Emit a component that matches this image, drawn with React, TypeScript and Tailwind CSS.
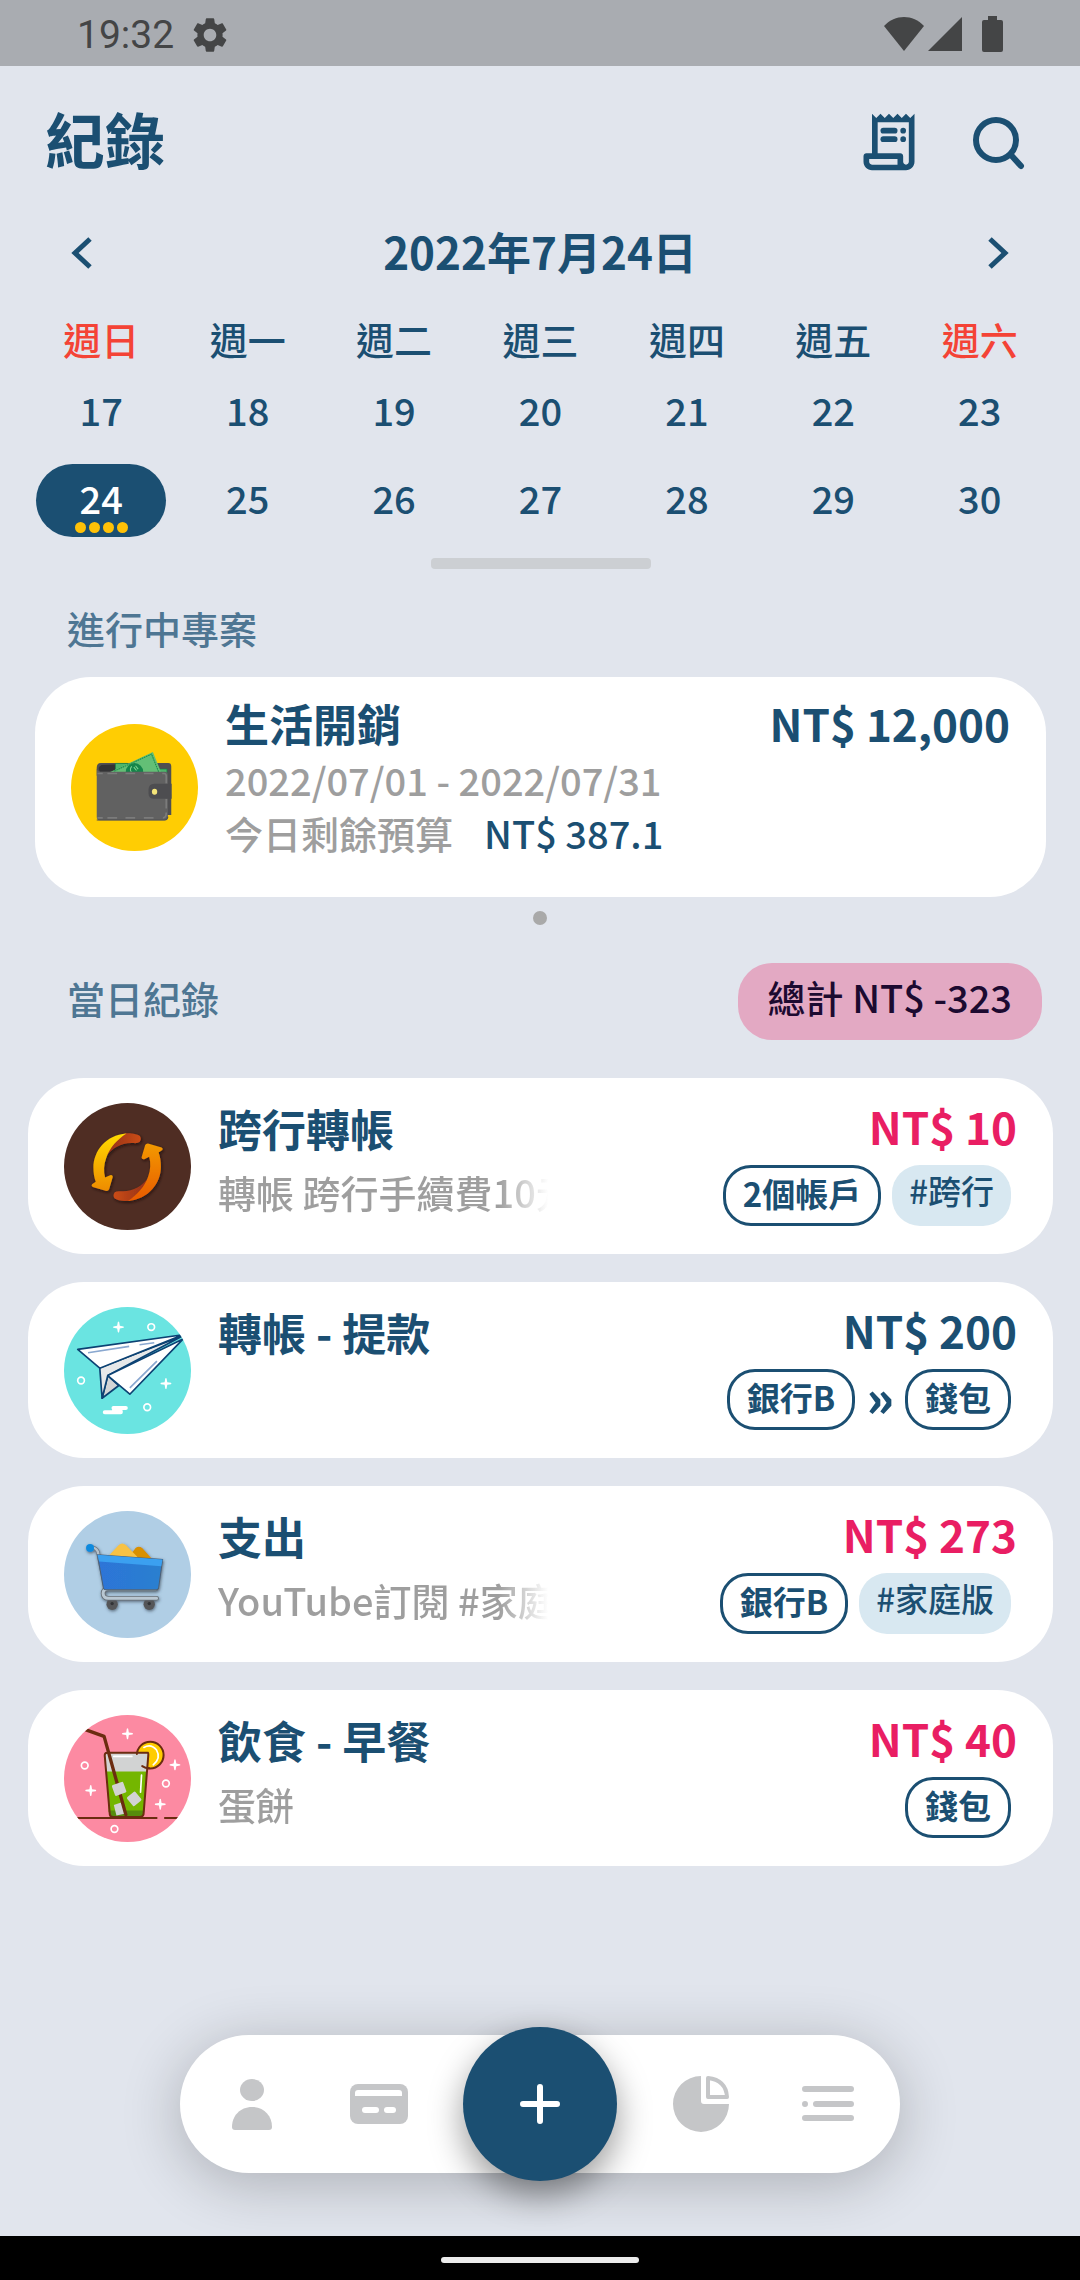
import type { ReactNode } from "react";

const weekdays = ["週日", "週一", "週二", "週三", "週四", "週五", "週六"];
const days = [17, 18, 19, 20, 21, 22, 23, 24, 25, 26, 27, 28, 29, 30];
const selectedDay = 24;

function StatusBar() {
  return (
    <div className="flex h-[66px] items-center justify-between bg-[#a9acb1] pr-[77px] pl-[77px] text-[#444546]">
      <div className="flex items-center gap-[15px] pt-1">
        <span className="font-[Roboto,sans-serif] text-[39px] leading-[44px]">19:32</span>
        <svg className="size-[42px]" viewBox="0 0 24 24" fill="currentColor" aria-hidden="true">
          <path d="M19.14 12.94c.04-.3.06-.61.06-.94 0-.32-.02-.64-.07-.94l2.03-1.58c.18-.14.23-.41.12-.61l-1.92-3.32c-.12-.22-.37-.29-.59-.22l-2.39.96c-.5-.38-1.03-.7-1.62-.94l-.36-2.54c-.04-.24-.24-.41-.48-.41h-3.84c-.24 0-.43.17-.47.41l-.36 2.54c-.59.24-1.13.57-1.62.94l-2.39-.96c-.22-.08-.47 0-.59.22L2.74 8.87c-.12.21-.08.47.12.61l2.03 1.58c-.05.3-.09.63-.09.94s.02.64.07.94l-2.03 1.58c-.18.14-.23.41-.12.61l1.92 3.32c.12.22.37.29.59.22l2.39-.96c.5.38 1.03.7 1.62.94l.36 2.54c.05.24.24.41.48.41h3.84c.24 0 .44-.17.47-.41l.36-2.54c.59-.24 1.13-.56 1.62-.94l2.39.96c.22.08.47 0 .59-.22l1.92-3.32c.12-.22.07-.47-.12-.61l-2.01-1.58zM12 15.6c-1.98 0-3.6-1.62-3.6-3.6s1.62-3.6 3.6-3.6 3.6 1.62 3.6 3.6-1.62 3.6-3.6 3.6z" />
        </svg>
      </div>
      <div className="flex items-center pt-[2px]">
        <svg className="h-[36px] w-[42px]" viewBox="0 0 42 36" fill="currentColor" aria-hidden="true">
          <path d="M1 10C12 -2 30 -2 41 10L21 35Z" />
        </svg>
        <svg className="ml-[3px] h-[36px] w-[34px]" viewBox="0 0 34 36" fill="currentColor" aria-hidden="true">
          <path d="M34 1V35H0Z" />
        </svg>
        <svg className="ml-5 h-[36px] w-[21px]" viewBox="0 0 21 36" fill="currentColor" aria-hidden="true">
          <path d="M6 0H15V4H19Q21 4 21 6V34Q21 36 19 36H2Q0 36 0 34V6Q0 4 2 4H6Z" />
        </svg>
      </div>
    </div>
  );
}

function Header() {
  return (
    <header className="flex h-[152px] items-center justify-between pr-[48px] pl-[45px]">
      <h1 className="pb-2 text-[60px] leading-[72px] font-bold">紀錄</h1>
      <div className="flex items-center gap-[41px]">
        <button type="button" aria-label="帳單">
          <svg className="size-[68px]" viewBox="0 0 24 24" fill="currentColor" aria-hidden="true">
            <path d="M19.5 3.5 18 2l-1.5 1.5L15 2l-1.5 1.5L12 2l-1.5 1.5L9 2 7.5 3.5 6 2v14H4c-.55 0-1 .45-1 1v2c0 1.66 1.34 3 3 3h12c1.66 0 3-1.34 3-3V2l-1.5 1.5zM15 20H6c-.55 0-1-.45-1-1v-1h10v2zm4-1c0 .55-.45 1-1 1s-1-.45-1-1v-2c0-.55-.45-1-1-1H8V5h11v14z" />
            <rect x="9" y="7" width="6" height="2" rx="1" />
            <rect x="9" y="10" width="6" height="2" rx="1" />
            <circle cx="17" cy="8" r="1" />
            <circle cx="17" cy="11" r="1" />
          </svg>
        </button>
        <button type="button" aria-label="搜尋">
          <svg className="size-[68px]" viewBox="0 0 68 68" fill="none" stroke="currentColor" strokeWidth="6" strokeLinecap="round" aria-hidden="true">
            <circle cx="32" cy="32" r="20" />
            <path d="M47 47L57 58" />
          </svg>
        </button>
      </div>
    </header>
  );
}

function MonthBar() {
  return (
    <div className="flex h-[70px] items-center justify-between px-[54px]">
      <button type="button" aria-label="上一週">
        <svg className="size-[56px]" viewBox="0 0 56 56" fill="none" stroke="currentColor" strokeWidth="5" aria-hidden="true">
          <path d="M36 14L21 28L36 42" />
        </svg>
      </button>
      <h2 className="pb-1 text-[44px] leading-[56px] font-bold">2022年7月24日</h2>
      <button type="button" aria-label="下一週">
        <svg className="size-[56px]" viewBox="0 0 56 56" fill="none" stroke="currentColor" strokeWidth="5" aria-hidden="true">
          <path d="M20 14L35 28L20 42" />
        </svg>
      </button>
    </div>
  );
}

function Calendar() {
  return (
    <section className="mt-3 pr-[27px] pl-[28px]">
      <div className="grid grid-cols-7 text-[38px]">
        {weekdays.map((name, i) => (
          <div
            key={name}
            className={
              i === 0 || i === 6
                ? "flex h-[76px] items-center justify-center font-medium text-[#f44336]"
                : "flex h-[76px] items-center justify-center font-medium"
            }
          >
            {name}
          </div>
        ))}
      </div>
      <div className="grid grid-cols-7 gap-y-[15px] text-[38px]">
        {days.map((day) => (
          <button
            type="button"
            key={day}
            aria-pressed={day === selectedDay}
            className={
              day === selectedDay
                ? "relative mx-2 flex h-[73px] items-center justify-center rounded-full bg-[#1b4f72] pb-[6px] font-medium text-white"
                : "mx-2 flex h-[73px] items-center justify-center rounded-full pb-[6px] font-medium"
            }
          >
            {day}
            {day === selectedDay && (
              <span className="absolute inset-x-0 bottom-1 flex justify-center gap-[3px]">
                {[0, 1, 2, 3].map((n) => (
                  <span key={n} className="size-[11px] rounded-full bg-[#ffc107]" />
                ))}
              </span>
            )}
          </button>
        ))}
      </div>
      <div className="mx-auto mt-[21px] h-[11px] w-[220px] rounded-[4px] bg-[#cccfd3]" />
    </section>
  );
}

function WalletIcon() {
  return (
    <svg className="size-[127px] shrink-0 rounded-full" viewBox="31 25 380 380" aria-hidden="true">
      <rect x="31" y="25" width="380" height="380" fill="#ffcd03" />
      <path d="M120 142H322Q331 142 331 152V297H300V180H108V156Q108 142 120 142Z" fill="#4f4f51" />
      <path d="M118 168Q108 156 122 148L165 146V168Z" fill="#333335" />
      <path d="M164 143H200V168H164Z" fill="#4fb56c" stroke="#118a44" strokeWidth="2" />
      <path d="M290 160H318V180H290Z" fill="#4fb56c" stroke="#118a44" strokeWidth="2" />
      <path d="M145 170L276 109L300 168V176H145Z" fill="#63bf76" />
      <path d="M160 166L272 115L293 168" fill="none" stroke="#17894a" strokeWidth="3" strokeDasharray="5 2" />
      <circle cx="221" cy="168" r="26" fill="#15854a" />
      <path d="M213 152Q205 160 212 170M219 154L227 164M224 150L232 160" fill="none" stroke="#7fd592" strokeWidth="3" />
      <path d="M108 158Q110 168 122 168H312Q321 168 321 178V302Q321 313 311 313H118Q108 313 108 303Z" fill="#616161" />
      <path d="M110 173H126M140 173H169M194 173H223M249 173H278M304 173H310Q316 173 316 182V203M316 249V278M316 290Q316 306 306 306M110 306H126M140 306H169M194 306H223M249 306H278" fill="none" stroke="#7b7b7b" strokeWidth="5" />
      <path d="M108 312H311Q320 311 321 302" fill="none" stroke="#505052" strokeWidth="3" />
      <path d="M332 204H280Q263 204 263 222V232Q263 249 280 249H332Z" fill="#4d4d50" />
      <ellipse cx="281" cy="228" rx="8" ry="9" fill="#f5e579" />
    </svg>
  );
}

function TransferIcon() {
  const arrow =
    "M228 158C165 162 129 212 129 260C129 276 131 290 136 303L125 310Q121 315 127 318L168 330Q174 330 176 325L187 288Q186 281 179 283L164 290C159 272 160 250 167 232C178 200 200 176 228 158Z";
  const band =
    "M222 158C245 156 262 161 268 166Q274 175 267 184Q262 188 250 187C215 184 185 202 170 224C180 195 196 174 222 158Z";
  return (
    <svg className="size-[127px] shrink-0 rounded-full" viewBox="41 67 380 380" aria-hidden="true">
      <defs>
        <linearGradient id="arrow-yellow" x1="0" y1="0" x2="0" y2="1">
          <stop offset="0" stopColor="#ffdc00" />
          <stop offset="1" stopColor="#ee8b05" />
        </linearGradient>
        <linearGradient id="arrow-orange" x1="0" y1="0" x2="0" y2="1">
          <stop offset="0" stopColor="#e85a00" />
          <stop offset="1" stopColor="#f39a05" />
        </linearGradient>
        <linearGradient id="arrow-red" x1="0" y1="0" x2="1" y2="0">
          <stop offset="0" stopColor="#93311a" />
          <stop offset="1" stopColor="#cb4c18" />
        </linearGradient>
        <filter id="arrow-shadow" x="-20%" y="-20%" width="150%" height="150%">
          <feDropShadow dx="3" dy="4" stdDeviation="5" floodColor="#1c0d08" floodOpacity="0.8" />
        </filter>
      </defs>
      <rect x="41" y="67" width="380" height="380" fill="#4f2d23" />
      <g filter="url(#arrow-shadow)">
        <path d={band} fill="url(#arrow-red)" />
        <path d={arrow} fill="url(#arrow-yellow)" />
        <g transform="rotate(180 230 259)">
          <path d={band} fill="url(#arrow-red)" />
          <path d={arrow} fill="url(#arrow-orange)" />
        </g>
      </g>
    </svg>
  );
}

function Sparkle({ x, y }: { x: number; y: number }) {
  return (
    <path
      transform={`translate(${x} ${y})`}
      d="M-2 -15Q0 -18 2 -15L4 -4L15 -2Q18 0 15 2L4 4L2 15Q0 18 -2 15L-4 4L-15 2Q-18 0 -15 -2L-4 -4Z"
      fill="#fff"
    />
  );
}

function Ring({ x, y }: { x: number; y: number }) {
  return <circle cx={x} cy={y} r="10" fill="none" stroke="#fff" strokeWidth="5" />;
}

function PlaneIcon() {
  return (
    <svg className="size-[127px] shrink-0 rounded-full" viewBox="41 680 380 380" aria-hidden="true">
      <rect x="41" y="680" width="380" height="380" fill="#6ae4e1" />
      <Sparkle x={204} y={740} />
      <Sparkle x={346} y={909} />
      <Ring x={302} y={740} />
      <Ring x={92} y={900} />
      <Ring x={290} y={980} />
      <path d="M163 995H211M189 982H226" stroke="#fff" strokeWidth="12" strokeLinecap="round" />
      <path d="M185 988H216" stroke="#fff" strokeWidth="12" />
      <g stroke="#0c4273" strokeWidth="5" strokeLinejoin="round">
        <path d="M172 885L205 915L155 953Z" fill="#d2d5d6" />
        <path d="M148 862L397 766L172 885L155 953Z" fill="#e6e8e9" />
        <path d="M172 885L397 776L238 941Z" fill="#fff" />
        <path d="M82 807L397 763L148 863Z" fill="#fff" />
      </g>
      <path d="M113 817L236 798M267 793L311 787M319 842L238 922" stroke="#8aa8d0" strokeWidth="5" />
    </svg>
  );
}

function CartIcon() {
  return (
    <svg className="size-[127px] shrink-0 rounded-full" viewBox="41 59 380 380" aria-hidden="true">
      <defs>
        <linearGradient id="cart-body" x1="0" y1="0" x2="1" y2="0">
          <stop offset="0" stopColor="#2d74d8" />
          <stop offset="1" stopColor="#2b80cf" />
        </linearGradient>
        <filter id="cart-shadow" x="-20%" y="-20%" width="150%" height="150%">
          <feDropShadow dx="2" dy="4" stdDeviation="5" floodColor="#33404c" floodOpacity="0.7" />
        </filter>
      </defs>
      <rect x="41" y="59" width="380" height="380" fill="#b0cee5" />
      <g filter="url(#cart-shadow)">
        <path d="M232 200L256 169Q265 162 275 170L308 206Z" fill="#d99000" />
        <path d="M170 198L205 161Q215 152 226 161L268 204Z" fill="#f7c245" />
        <path d="M122 168Q136 168 142 180L164 286" fill="none" stroke="#6c7680" strokeWidth="11" />
        <path d="M122 168Q136 168 142 180L164 286" fill="none" stroke="#b5c1cb" strokeWidth="7" />
        <circle cx="185" cy="338" r="17" fill="#555759" />
        <circle cx="296" cy="338" r="17" fill="#555759" />
        <circle cx="185" cy="336" r="5" fill="#303235" />
        <circle cx="296" cy="336" r="5" fill="#303235" />
        <path d="M316 292H172Q158 293 158 306Q159 320 174 320H318" fill="none" stroke="#666e76" strokeWidth="14" strokeLinecap="round" />
        <path d="M316 292H172Q158 293 158 306Q159 320 174 320H318" fill="none" stroke="#b9c7d2" strokeWidth="9" strokeLinecap="round" />
        <path d="M141 190L336 204L324 290Q322 295 316 295H166Q160 295 159 290Z" fill="url(#cart-body)" stroke="#4c6076" strokeWidth="3" />
        <path d="M141 190L336 204L332 224L146 210Z" fill="#3aa0f0" />
        <circle cx="119" cy="170" r="12" fill="#118ade" />
      </g>
    </svg>
  );
}

function DrinkIcon() {
  return (
    <svg className="size-[127px] shrink-0 rounded-full" viewBox="41 671 380 380" aria-hidden="true">
      <rect x="41" y="671" width="380" height="380" fill="#fc8aa2" />
      <Sparkle x={231} y={727} />
      <Sparkle x={373} y={820} />
      <Sparkle x={121} y={897} />
      <Sparkle x={329} y={938} />
      <Ring x={103} y={822} />
      <Ring x={346} y={876} />
      <Ring x={192} y={1012} />
      <path d="M60 979H318M343 979H400" stroke="#6b2c10" strokeWidth="6" strokeLinecap="round" />
      <circle cx="299" cy="791" r="40" fill="#fc0" stroke="#6b2c10" strokeWidth="6" />
      <path d="M280 768Q302 756 318 776Q332 800 308 820" fill="none" stroke="#fff" strokeWidth="5" strokeLinecap="round" />
      <path d="M164 783H292L291 842H168Z" fill="#d2d3d3" />
      <path d="M168 840H289L281 962H175Z" fill="#74b600" />
      <path d="M174 957H281L277 975H180Z" fill="#568c0c" />
      <path d="M190 940L214 932L226 966L198 972Z" fill="#d2d3d3" />
      <path d="M80 706L161 735L226 969" fill="none" stroke="#6b2c10" strokeWidth="10" strokeLinejoin="round" strokeLinecap="round" />
      <rect x="188" y="875" width="36" height="34" rx="4" fill="#d2d3d3" transform="rotate(-20 206 892)" />
      <rect x="235" y="905" width="32" height="34" rx="4" fill="#d2d3d3" transform="rotate(-40 251 922)" />
      <path d="M259 788V784H292Q294 786 293 794L279 968Q277 976 268 976H188Q179 976 178 968L163 794Q162 784 170 784H256" fill="none" stroke="#6b2c10" strokeWidth="6" strokeLinecap="round" />
      <path d="M275 824Q284 830 296 830" fill="none" stroke="#6b2c10" strokeWidth="6" strokeLinecap="round" />
      <path d="M190 795H244M273 851L270 902" stroke="#fff" strokeWidth="5" strokeLinecap="round" />
    </svg>
  );
}

function ProjectCard() {
  return (
    <article className="mr-[34px] ml-[35px] flex items-center gap-[27px] rounded-[56px] bg-white px-9 py-4">
      <WalletIcon />
      <div className="min-w-0 flex-1 pb-[22px]">
        <div className="flex items-center justify-between text-[44px] leading-[60px] font-bold">
          <h3>生活開銷</h3>
          <span>NT$ 12,000</span>
        </div>
        <p className="text-[38px] leading-[53px] font-medium text-[#9e9e9e]">2022/07/01 - 2022/07/31</p>
        <p className="flex gap-[31px] text-[38px] leading-[53px] font-medium text-[#9e9e9e]">
          <span>今日剩餘預算</span>
          <span className="text-[#1b4f72]">NT$ 387.1</span>
        </p>
      </div>
    </article>
  );
}

function Account({ children }: { children: ReactNode }) {
  return (
    <span className="flex h-[61px] items-center rounded-[28px] border-[3px] border-[#1b4f72] px-[17px] pb-[6px] text-[33px] leading-[48px] font-bold">
      {children}
    </span>
  );
}

function Tag({ children }: { children: ReactNode }) {
  return (
    <span className="flex h-[61px] items-center rounded-[28px] bg-[#d8e8f1] px-[17px] pb-3 text-[33px] leading-[48px] font-medium">
      {children}
    </span>
  );
}

type RecordItem = {
  icon: ReactNode;
  title: string;
  note?: string;
  amount: string;
  expense: boolean;
  chips: ReactNode;
};

const records: RecordItem[] = [
  {
    icon: <TransferIcon />,
    title: "跨行轉帳",
    note: "轉帳 跨行手續費10元",
    amount: "NT$ 10",
    expense: true,
    chips: (
      <>
        <Account>2個帳戶</Account>
        <Tag>#跨行</Tag>
      </>
    ),
  },
  {
    icon: <PlaneIcon />,
    title: "轉帳 - 提款",
    amount: "NT$ 200",
    expense: false,
    chips: (
      <>
        <Account>銀行B</Account>
        <span className="pb-[10px] text-[50px] leading-[48px] font-black">»</span>
        <Account>錢包</Account>
      </>
    ),
  },
  {
    icon: <CartIcon />,
    title: "支出",
    note: "YouTube訂閱 #家庭版",
    amount: "NT$ 273",
    expense: true,
    chips: (
      <>
        <Account>銀行B</Account>
        <Tag>#家庭版</Tag>
      </>
    ),
  },
  {
    icon: <DrinkIcon />,
    title: "飲食 - 早餐",
    note: "蛋餅",
    amount: "NT$ 40",
    expense: true,
    chips: <Account>錢包</Account>,
  },
];

function RecordCard({ item }: { item: RecordItem }) {
  return (
    <li className="flex h-[176px] items-center justify-between rounded-[56px] bg-white px-9">
      <div className="flex min-w-0 items-center gap-[27px]">
        {item.icon}
        <div className="h-[140px] w-[330px] min-w-0">
          <h3 className="text-[44px] leading-[64px] font-bold whitespace-nowrap">{item.title}</h3>
          {item.note && (
            <p className="overflow-hidden bg-linear-to-r from-[#9e9e9e] from-85% to-transparent bg-clip-text text-[38px] leading-[64px] font-medium whitespace-nowrap text-transparent">
              {item.note}
            </p>
          )}
        </div>
      </div>
      <div className="flex h-[140px] shrink-0 flex-col items-end">
        <span
          className={
            item.expense
              ? "text-[44px] leading-[60px] font-bold text-[#e91e63]"
              : "text-[44px] leading-[60px] font-bold"
          }
        >
          {item.amount}
        </span>
        <div className="mt-[9px] mr-[6px] flex items-center gap-[11px]">{item.chips}</div>
      </div>
    </li>
  );
}

function BottomNav() {
  return (
    <nav className="mx-auto mt-auto mb-[63px] flex h-[138px] w-2/3 items-center justify-between rounded-full bg-white px-2 text-[#c5c6c8] shadow-[0_10px_60px_rgba(0,0,0,0.24)]">
      <button type="button" aria-label="帳號" className="flex h-full flex-1 items-center justify-center">
        <svg className="h-[51px] w-[40px]" viewBox="0 0 40 51" fill="currentColor" aria-hidden="true">
          <ellipse cx="20" cy="11" rx="12" ry="11" />
          <path d="M20 28C8 28 0 37 0 48Q0 51 3 51H37Q40 51 40 48C40 37 32 28 20 28Z" />
        </svg>
      </button>
      <button type="button" aria-label="帳戶" className="flex h-full flex-1 items-center justify-center">
        <svg className="h-[40px] w-[58px]" viewBox="0 0 58 40" fill="currentColor" aria-hidden="true">
          <rect width="58" height="40" rx="8" />
          <path d="M5 12V9Q5 6 8 6H49Q52 6 52 9V12Z" fill="#fff" />
          <rect x="12" y="23" width="17" height="6" rx="3" fill="#fff" />
          <rect x="34" y="23" width="12" height="6" rx="3" fill="#fff" />
        </svg>
      </button>
      <button
        type="button"
        aria-label="新增"
        className="mx-5 flex size-[154px] shrink-0 items-center justify-center rounded-full bg-[#1b4f72] text-white shadow-[0_14px_34px_rgba(0,0,0,0.4)]"
      >
        <svg className="size-[40px]" viewBox="0 0 40 40" stroke="currentColor" strokeWidth="6" strokeLinecap="round" aria-hidden="true">
          <path d="M20 3V37M3 20H37" />
        </svg>
      </button>
      <button type="button" aria-label="統計" className="flex h-full flex-1 items-center justify-center">
        <svg className="size-[58px]" viewBox="0 0 58 58" fill="currentColor" aria-hidden="true">
          <path d="M29 1V26Q29 29 32 29H57A28 28 0 1 1 29 1Z" />
          <path d="M36 3Q54 5 55 22H36Z" fill="none" stroke="currentColor" strokeWidth="4" strokeLinejoin="round" />
        </svg>
      </button>
      <button type="button" aria-label="選單" className="flex h-full flex-1 items-center justify-center">
        <svg className="h-[36px] w-[52px]" viewBox="0 0 52 36" stroke="currentColor" strokeWidth="6" strokeLinecap="round" aria-hidden="true">
          <path d="M3 3H49M3 18H3M14 18H49M3 32H49" />
        </svg>
      </button>
    </nav>
  );
}

export default function App() {
  return (
    <div className="flex min-h-screen flex-col bg-[#e1e5ed] font-['Noto_Sans_CJK_TC',sans-serif] text-[#1b4f72]">
      <StatusBar />
      <Header />
      <MonthBar />
      <Calendar />

      <section>
        <h2 className="flex h-[108px] items-center px-[67px] pt-2 text-[38px] font-medium text-[#4e7693]">進行中專案</h2>
        <ProjectCard />
        <div className="mx-auto mt-[14px] size-[14px] rounded-full bg-[#a9a9a9]" />
      </section>

      <section className="mt-[38px]">
        <div className="flex items-center justify-between pr-[38px] pl-[67px]">
          <h2 className="pb-2 text-[38px] font-medium text-[#4e7693]">當日紀錄</h2>
          <span className="flex h-[77px] items-center rounded-[34px] bg-[#e3a9c3] px-[30px] pb-[10px] text-[38px] font-medium text-[#1c0a30]">
            總計 NT$ -323
          </span>
        </div>
        <ul className="mt-[38px] flex flex-col gap-[28px] pr-[27px] pl-[28px]">
          {records.map((item) => (
            <RecordCard key={item.title} item={item} />
          ))}
        </ul>
      </section>

      <BottomNav />
      <div className="flex h-[44px] items-center justify-center bg-black">
        <div className="mt-1 h-[6px] w-[198px] rounded-full bg-[#ececec]" />
      </div>
    </div>
  );
}
